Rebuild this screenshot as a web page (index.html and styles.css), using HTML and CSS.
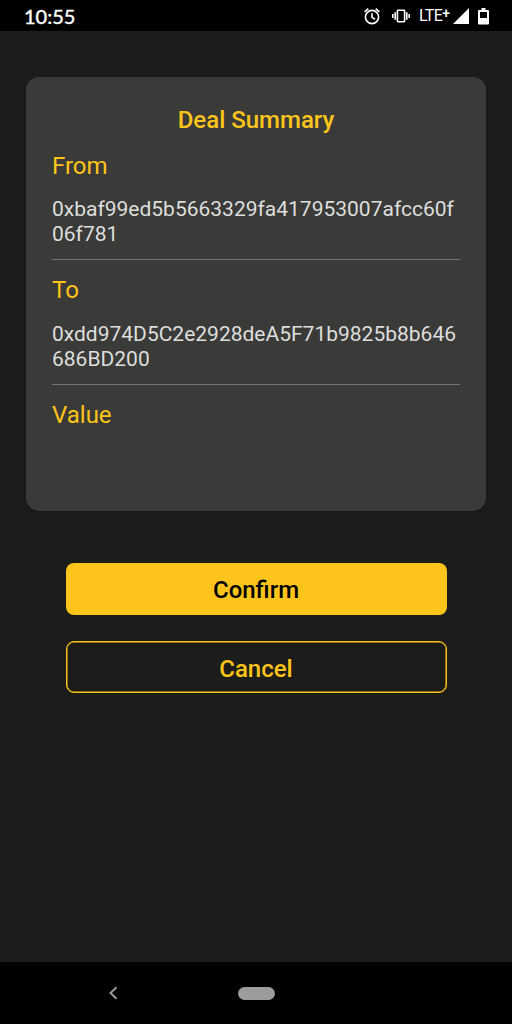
FILE: index.html
```html
<!DOCTYPE html>
<html lang="en">
<head>
<meta charset="utf-8">
<title>Deal Summary</title>
<link rel="stylesheet" href="styles.css">
</head>
<body>
<header class="status">
  <span class="time">10:55</span>
  <div class="indicators">
    <svg class="alarm" width="16" height="18" viewBox="0 0 16 18" fill="none" stroke="#fff" stroke-width="1.600"><circle cx="8" cy="10" r="6.600"/><path d="M8 6.200v4.200l3 1.800M.6 4.800L4.300 1.600M15.400 4.800L11.700 1.600"/></svg>
    <svg class="vibrate" width="18" height="16" viewBox="0 0 18 16" fill="none" stroke="#fff" stroke-width="1.600"><rect x="5.400" y="2.300" width="7.200" height="11.400" rx=".6"/><path d="M3.200 4.300v7.400M.8 6v4M14.800 4.300v7.400M17.200 6v4"/></svg>
    <span class="lte">LTE<sup>+</sup></span>
    <svg class="signal" width="16" height="16" viewBox="0 0 16 16"><path d="M0 16L16 0V16Z" fill="#fff"/></svg>
    <svg class="battery" width="11" height="18" viewBox="0 0 11 18"><path d="M3.500 1h4v2H10q1 0 1 1v12.500q0 1-1 1H1q-1 0-1-1V4q0-1 1-1h2.500zM2 5v6h7V5z" fill="#fff" fill-rule="evenodd"/></svg>
  </div>
</header>
<main>
  <section class="card">
    <h1>Deal Summary</h1>
    <div class="field"><h2>From</h2><p>0xbaf99ed5b5663329fa417953007afcc60f06f781</p></div>
    <div class="field"><h2>To</h2><p>0xdd974D5C2e2928deA5F71b9825b8b646686BD200</p></div>
    <div class="field last"><h2>Value</h2></div>
  </section>
  <div class="actions">
    <button class="confirm">Confirm</button>
    <button class="cancel">Cancel</button>
  </div>
</main>
<nav class="navbar">
  <svg class="back" width="10" height="14" viewBox="0 0 10 14"><path d="M8.500 1.300L2.500 7L8.500 12.700" fill="none" stroke="#9c9c9c" stroke-width="1.900"/></svg>
  <span class="home"></span>
</nav>
</body>
</html>
```

FILE: styles.css
```css
* { box-sizing: border-box; }
body { margin: 0; height: 1024px; display: flex; flex-direction: column; background: #1c1c1a; font-family: Roboto, sans-serif; }
h1, h2, p { margin: 0; }
.status { height: 31px; background: #000; color: #fff; display: flex; justify-content: space-between; padding: 0 23px 0 24px; }
.time { font-family: Lato, sans-serif; font-size: 20px; line-height: 32px; -webkit-text-stroke: .4px #fff; }
.indicators { display: flex; align-items: center; }
.vibrate { margin-left: 12px; }
.lte { font-size: 16px; line-height: 31px; margin-left: 9px; width: 34px; white-space: nowrap; letter-spacing: -.6px; }
.lte sup { font-size: 14px; line-height: 0; font-weight: 500; vertical-align: 3px; }
.battery { margin-left: 9px; }
main { flex: 1; padding: 46px 26px 0; }
.card { height: 433.500px; border-radius: 13px; padding: 27px 26px 0; background: #3a3a38; box-shadow: 0 1px 3px rgba(0,0,0,.3); }
h1, h2 { color: #fdc51b; font-size: 24px; }
h1 { font-weight: 500; line-height: 33px; text-align: center; }
h2 { font-weight: 400; line-height: 30px; }
.field { height: 125px; padding-top: 15px; border-bottom: 1px solid #72726f; }
.field:nth-of-type(1) { height: 123px; padding-top: 14px; }
.field p { margin-top: 17px; font-size: 21px; line-height: 24.600px; color: #dededd; word-break: break-all; }
.field.last { border: 0; }
.actions { padding: 52.500px 39.500px 0; display: flex; flex-direction: column; gap: 26px; }
.field:nth-of-type(1) p { margin-top: 16px; }
button { height: 52px; border-radius: 8px; font: 500 24px/50px Roboto, sans-serif; padding: 2px 0 0; }
.confirm { background: #fdc51b; color: #000; border: 0; }
.cancel { background: transparent; color: #fdc51b; border: 1px solid #fdc51b; box-shadow: inset 0 0 0 .5px #fdc51b; }
.navbar { height: 62px; background: #000; display: flex; align-items: center; padding-left: 108px; }
.home { width: 37px; height: 13px; border-radius: 7px; background: #9c9c9c; margin-left: 120px; }
```
